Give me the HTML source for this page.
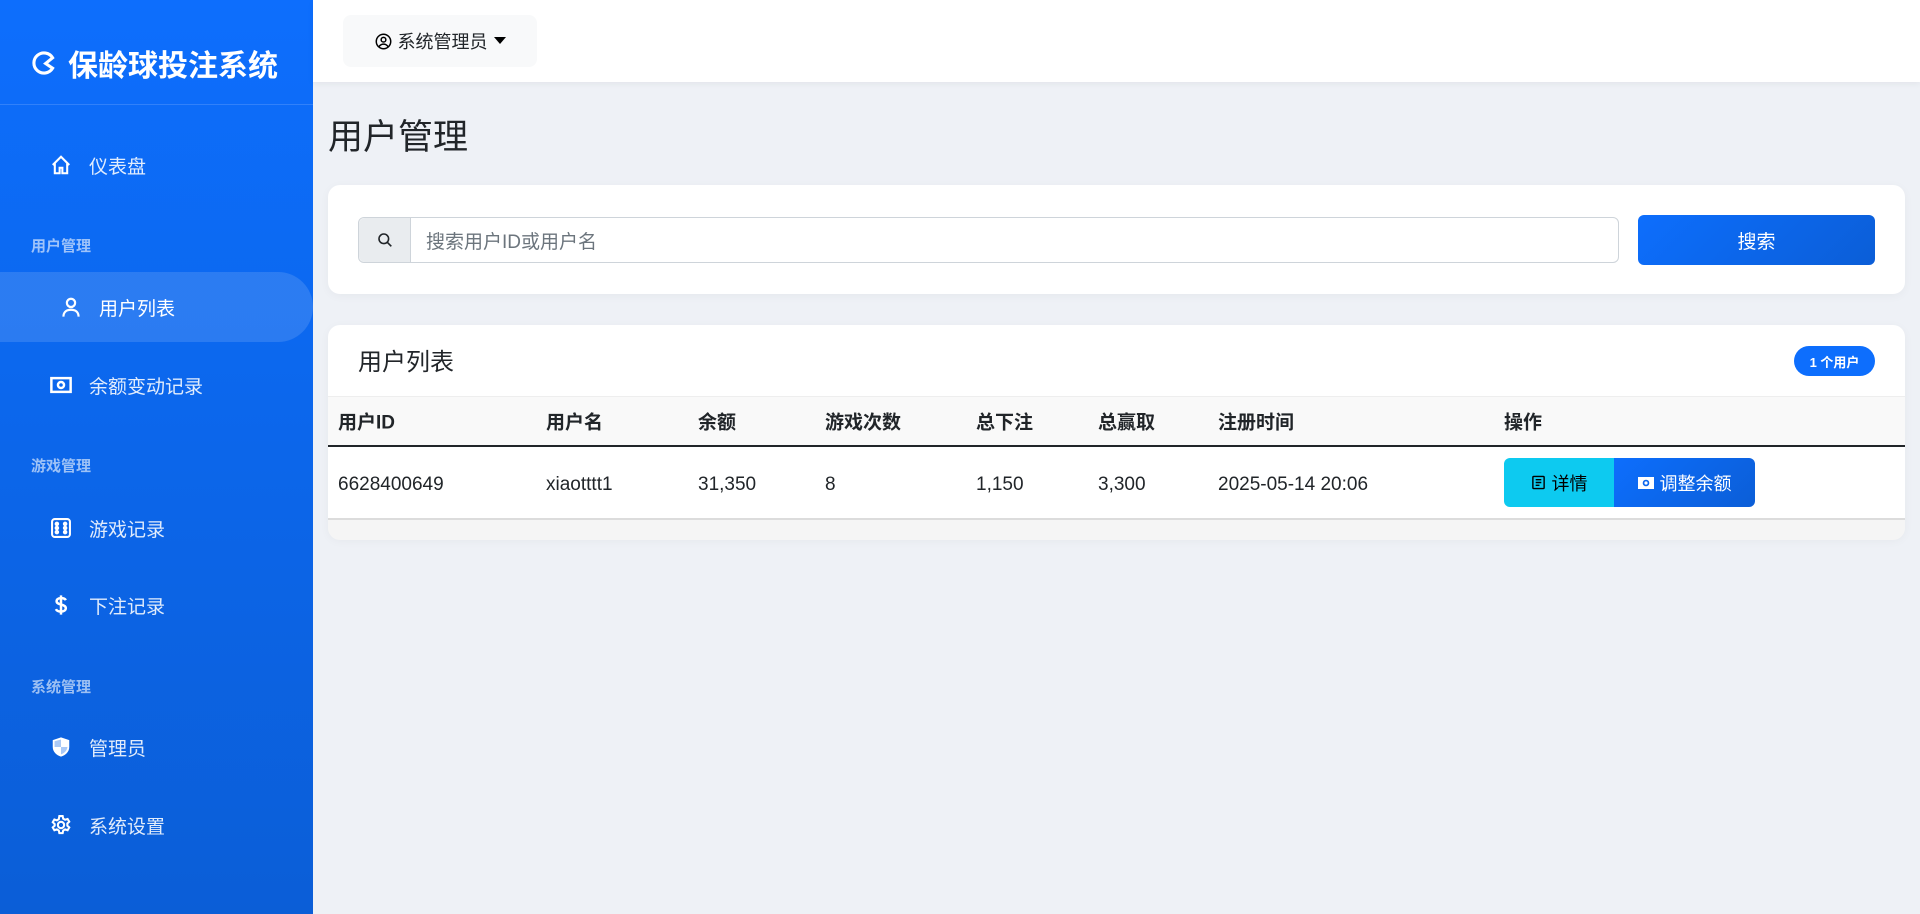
<!DOCTYPE html>
<html><head><meta charset="utf-8">
<style>
*{box-sizing:border-box;margin:0;padding:0}
body{width:1920px;height:914px;overflow:hidden;background:#eef1f6;font-family:"Liberation Sans","Noto Sans CJK SC",sans-serif;color:#212529;position:relative}
.side{position:absolute;left:0;top:0;width:313px;height:914px;background:linear-gradient(180deg,#0d6efd 0%,#0b5ed7 100%);color:#fff}
.logo{position:absolute;left:0;top:0;width:313px;height:105px;border-bottom:1px solid rgba(255,255,255,.15);display:flex;align-items:center;padding-left:31px;padding-top:22px;font-size:30px;font-weight:bold;gap:11px}
.item{position:absolute;left:0;width:313px;height:70px;display:flex;align-items:center;padding-left:50px;font-size:19px;color:rgba(255,255,255,.88)}
.item svg{width:22px;height:22px;margin-right:17px}
.item.act{background:rgba(255,255,255,.13);border-radius:0 36px 36px 0;padding-left:60px;color:#fff}
.sec{position:absolute;left:31px;font-size:15px;font-weight:bold;color:rgba(255,255,255,.6)}
.top{position:absolute;left:313px;top:0;right:0;height:82px;background:#fff;box-shadow:0 2px 6px rgba(0,0,0,.05)}
.ubtn{position:absolute;left:30px;top:15px;width:194px;height:52px;background:#f8f9fa;border-radius:8px;display:flex;align-items:center;justify-content:center;font-size:18px;gap:6px}
h1{position:absolute;left:328px;top:114px;font-size:35px;font-weight:normal;line-height:48px}
.card{position:absolute;left:328px;width:1577px;background:#fff;border-radius:12px;box-shadow:0 2px 10px rgba(0,0,0,.04)}
.ig{position:absolute;left:30px;top:32px;width:1261px;height:46px;border:1px solid #ced4da;border-radius:6px;display:flex;font-size:19px;color:#6c757d}
.ig .ad{width:52px;background:#e9ecef;border-right:1px solid #ced4da;display:flex;align-items:center;justify-content:center;border-radius:6px 0 0 6px}
.ig .ph{padding-left:15px;display:flex;align-items:center}
.sb{position:absolute;left:1310px;top:30px;width:237px;height:50px;border-radius:6px;background:linear-gradient(135deg,#0d6efd,#0b5ed7);color:#fff;font-size:19px;display:flex;align-items:center;justify-content:center}
.ct{position:absolute;left:30px;top:22px;font-size:24px;line-height:32px}
.badge{position:absolute;left:1466px;top:21px;width:81px;height:30px;border-radius:15px;background:#0d6efd;color:#fff;font-size:13px;font-weight:bold;display:flex;align-items:center;justify-content:center}
.thead{position:absolute;left:0;top:71px;width:1577px;height:51px;background:#f9f9f9;border-top:1px solid #eee;border-bottom:2px solid #212529;font-weight:bold;font-size:19px}
.row{position:absolute;left:0;top:123px;width:1577px;height:70px;font-size:19px}
.c{position:absolute;top:50%;transform:translateY(-50%);white-space:nowrap}
.row .c{margin-top:2px}
.foot{position:absolute;left:0;top:193px;width:1577px;height:22px;background:#f5f5f5;border-top:2px solid #dcdcdc;border-radius:0 0 12px 12px}
.b1{position:absolute;left:1176px;top:10px;width:110px;height:49px;background:#0dcaf0;border-radius:6px 0 0 6px;display:flex;align-items:center;justify-content:center;gap:6px;font-size:18px;color:#000}
.b2{position:absolute;left:1286px;top:10px;width:141px;height:49px;background:linear-gradient(135deg,#0d6efd,#0b5ed7);border-radius:0 6px 6px 0;display:flex;align-items:center;justify-content:center;gap:6px;font-size:18px;color:#fff}
</style></head><body>
<div class="side">
 <div class="logo"><svg width="26" height="26" viewBox="0 0 16 16" fill="none" stroke="#fff" stroke-width="1.9"><path d="M13.3 4.8A6.2 6.2 0 1 0 13.3 11.2L9 8.3z"/></svg>保龄球投注系统</div>
 <div class="item" style="top:130px"><svg viewBox="0 0 16 16" fill="none" stroke="#fff" stroke-width="1.5"><path d="M2 8 8 2l6 6M3.5 6.5V14h3.5v-4h2v4h3.5V6.5"/></svg>仪表盘</div>
 <div class="sec" style="top:235px">用户管理</div>
 <div class="item act" style="top:272px"><svg viewBox="0 0 16 16" fill="none" stroke="#fff" stroke-width="1.6"><circle cx="8" cy="5" r="3"/><path d="M2.5 15c0-3.5 2.5-5 5.5-5s5.5 1.5 5.5 5"/></svg>用户列表</div>
 <div class="item" style="top:350px"><svg viewBox="0 0 16 16" fill="none" stroke="#fff" stroke-width="1.8"><rect x="1" y="3" width="14" height="10"/><circle cx="8" cy="8" r="2.2"/></svg>余额变动记录</div>
 <div class="sec" style="top:455px">游戏管理</div>
 <div class="item" style="top:493px"><svg viewBox="0 0 16 16" fill="none" stroke="#fff" stroke-width="1.5"><rect x="1.5" y="1.5" width="13" height="13" rx="2"/><circle cx="5" cy="5" r=".9" fill="#fff"/><circle cx="5" cy="8" r=".9" fill="#fff"/><circle cx="5" cy="11" r=".9" fill="#fff"/><circle cx="11" cy="5" r=".9" fill="#fff"/><circle cx="11" cy="8" r=".9" fill="#fff"/><circle cx="11" cy="11" r=".9" fill="#fff"/></svg>游戏记录</div>
 <div class="item" style="top:570px"><svg viewBox="0 0 16 16" fill="none" stroke="#fff" stroke-width="1.8"><path d="M11.5 4.5C11 3.5 9.8 3 8 3 6 3 4.8 4 4.8 5.3c0 3 6.7 1.8 6.7 5 0 1.5-1.4 2.5-3.5 2.5-2 0-3.2-.7-3.7-1.8M8 1v14"/></svg>下注记录</div>
 <div class="sec" style="top:676px">系统管理</div>
 <div class="item" style="top:712px"><svg viewBox="0 0 16 16"><path d="M8 1 2 3v5c0 3.5 2.7 6 6 7 3.3-1 6-3.5 6-7V3z" fill="#fff"/><path d="M8 2.5V8H3.3V3.8z M8 8h4.7c-.3 2.6-2.3 4.5-4.7 5.4z" fill="#0b63e5" opacity=".35"/></svg>管理员</div>
 <div class="item" style="top:790px"><svg viewBox="0 0 16 16" fill="none" stroke="#fff" stroke-width="1.5"><circle cx="8" cy="8" r="2.3"/><path d="M6.8 1.5h2.4l.4 1.9 1.4.8 1.8-.6 1.2 2-1.4 1.3v1.6l1.4 1.3-1.2 2-1.8-.6-1.4.8-.4 1.9H6.8l-.4-1.9-1.4-.8-1.8.6-1.2-2 1.4-1.3V7.3L2 6l1.2-2 1.8.6 1.4-.8z"/></svg>系统设置</div>
</div>
<div class="top"><div class="ubtn"><svg width="17" height="17" viewBox="0 0 16 16" fill="none" stroke="#000" stroke-width="1.4"><circle cx="8" cy="8" r="6.8"/><circle cx="8" cy="6.3" r="2.2"/><path d="M3.8 12.8c1-1.6 2.4-2.3 4.2-2.3s3.2.7 4.2 2.3"/></svg>系统管理员<svg width="12" height="8" viewBox="0 0 12 8"><path d="M0 0h12L6 7z" fill="#000"/></svg></div></div>
<h1>用户管理</h1>
<div class="card" style="top:185px;height:109px">
 <div class="ig"><div class="ad"><svg width="16" height="16" viewBox="0 0 16 16" fill="none" stroke="#212529" stroke-width="1.6"><circle cx="6.8" cy="6.8" r="4.8"/><path d="m10.3 10.3 4 4"/></svg></div><div class="ph">搜索用户ID或用户名</div></div>
 <div class="sb">搜索</div>
</div>
<div class="card" style="top:325px;height:214px">
 <div class="ct">用户列表</div>
 <div class="badge">1 个用户</div>
 <div class="thead"><span class="c" style="left:10px">用户ID</span><span class="c" style="left:218px">用户名</span><span class="c" style="left:370px">余额</span><span class="c" style="left:497px">游戏次数</span><span class="c" style="left:648px">总下注</span><span class="c" style="left:770px">总赢取</span><span class="c" style="left:890px">注册时间</span><span class="c" style="left:1176px">操作</span></div>
 <div class="row"><span class="c" style="left:10px">6628400649</span><span class="c" style="left:218px">xiaotttt1</span><span class="c" style="left:370px">31,350</span><span class="c" style="left:497px">8</span><span class="c" style="left:648px">1,150</span><span class="c" style="left:770px">3,300</span><span class="c" style="left:890px">2025-05-14 20:06</span>
  <div class="b1"><svg width="15" height="15" viewBox="0 0 16 16" fill="none" stroke="#000" stroke-width="1.5"><rect x="2" y="1.5" width="12" height="13" rx="1"/><path d="M5 5h6M5 8h6M5 11h4"/></svg>详情</div>
  <div class="b2"><svg width="16" height="14" viewBox="0 0 16 14"><rect x="0" y="1" width="16" height="12" fill="#fff"/><circle cx="8" cy="7" r="3.3" fill="#0c66ee"/><circle cx="8" cy="7" r="1.6" fill="#fff"/></svg>调整余额</div>
 </div>
 <div class="foot"></div>
</div>
</body></html>
